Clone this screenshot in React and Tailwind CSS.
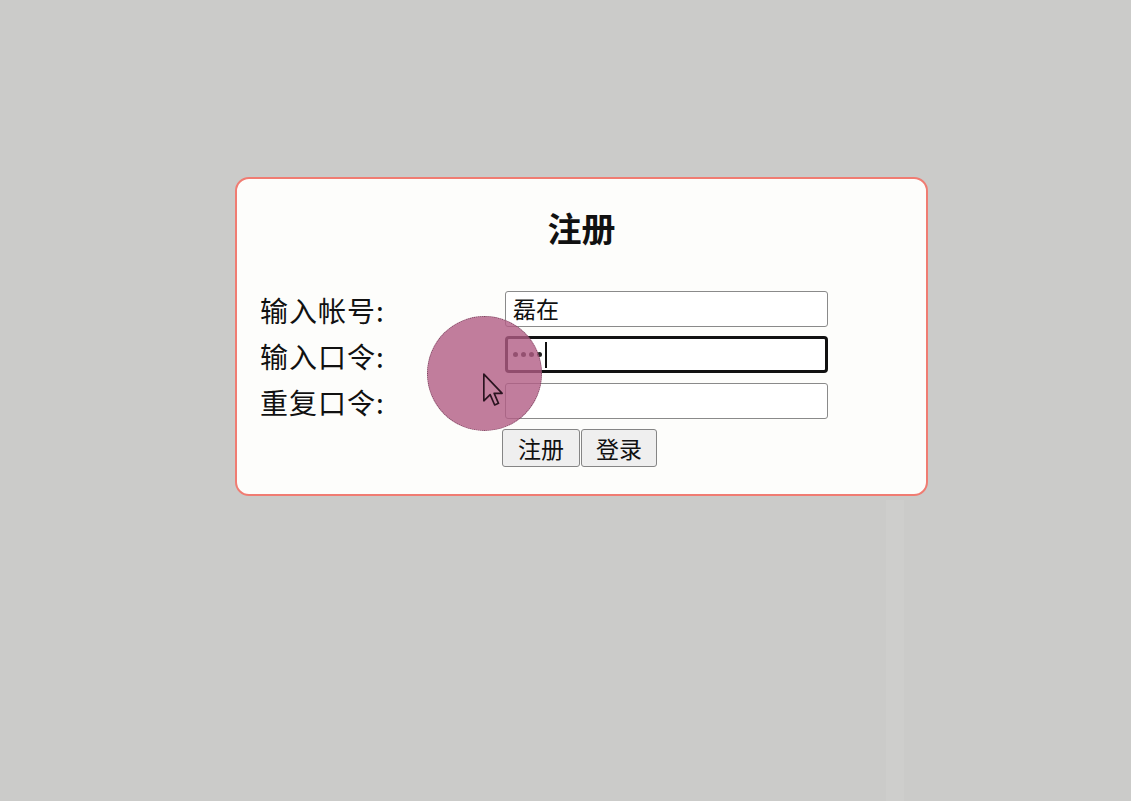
export default function App() {
  const font = { fontFamily: '"Noto Sans CJK SC", "Noto Sans", sans-serif' };
  return (
    <div className="relative w-[1131px] h-[801px] bg-[#cbcbc9] overflow-hidden" style={font}>
      <div className="absolute left-[886px] top-[500px] w-[18px] h-[301px] bg-[#cececc]" />
      <div className="relative left-[235px] top-[177px] w-[693px] h-[319px] border-2 border-[#f07c72] rounded-[14px] bg-[#fdfdfb] text-[#111]">
        <div className="pt-[25px] text-center text-[34px] font-bold leading-[48px]">注册</div>
        <div className="mt-[38px] pl-[23px] flex flex-col gap-[9px]">
          <div className="flex items-center h-[37px]">
            <div className="w-[245px] text-[28px] tracking-[1px] leading-[37px] pt-[4px]">输入帐号:</div>
            <div className="w-[323px] h-[36px] border border-[#8a8a8a] rounded-[3px] bg-white flex items-center pl-[7px] text-[23px]">磊在</div>
          </div>
          <div className="flex items-center h-[37px]">
            <div className="w-[245px] text-[28px] tracking-[1px] leading-[37px] pt-[4px]">输入口令:</div>
            <div className="w-[323px] h-[37px] border-[3px] border-[#111] rounded-[4px] bg-white flex items-center pl-[5px] gap-[3px]">
              <span className="w-[5px] h-[5px] rounded-full bg-[#222]" />
              <span className="w-[5px] h-[5px] rounded-full bg-[#222]" />
              <span className="w-[5px] h-[5px] rounded-full bg-[#222]" />
              <span className="w-[5px] h-[5px] rounded-full bg-[#222]" />
              <span className="w-[2px] h-[26px] bg-[#111]" />
            </div>
          </div>
          <div className="flex items-center h-[37px]">
            <div className="w-[245px] text-[28px] tracking-[1px] leading-[37px] pt-[4px]">重复口令:</div>
            <div className="w-[323px] h-[36px] border border-[#8a8a8a] rounded-[3px] bg-white" />
          </div>
          <div className="flex pl-[242px] mt-[1px] gap-[1px]">
            <button className="w-[78px] h-[38px] border border-[#858585] rounded-[3px] bg-[#efefef] text-[23px] leading-none text-[#111]" style={font}>注册</button>
            <button className="w-[76px] h-[38px] border border-[#858585] rounded-[3px] bg-[#efefef] text-[23px] leading-none text-[#111]" style={font}>登录</button>
          </div>
        </div>
      </div>
      <div className="absolute left-[427px] top-[316px] w-[115px] h-[115px] rounded-full bg-[rgba(177,92,132,0.8)] border border-dotted border-[#7a4a60]" />
      <svg className="absolute left-[483px] top-[373px]" width="20" height="34" viewBox="0 0 12 20">
        <path d="M0.5 0.5 L0.5 16.5 L4.3 12.8 L7 19 L9.3 18 L6.7 12 L11.5 12 Z" fill="#c3829f" stroke="#2a1420" strokeWidth="1" strokeLinejoin="round" />
      </svg>
    </div>
  );
}
